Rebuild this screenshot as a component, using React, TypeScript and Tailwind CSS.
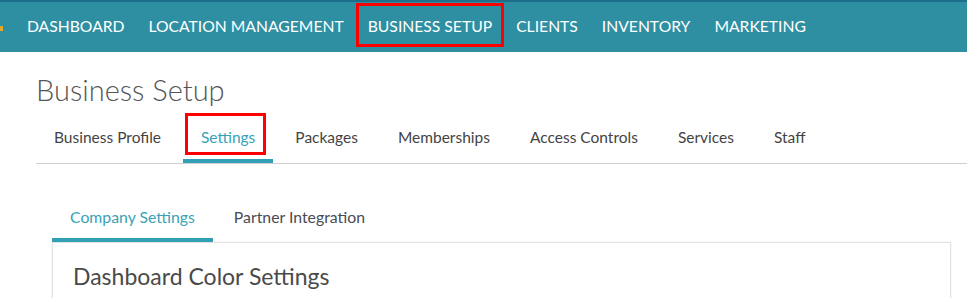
const navItems = [
  "DASHBOARD",
  "LOCATION MANAGEMENT",
  "BUSINESS SETUP",
  "CLIENTS",
  "INVENTORY",
  "MARKETING",
];

const tabs = [
  "Business Profile",
  "Settings",
  "Packages",
  "Memberships",
  "Access Controls",
  "Services",
  "Staff",
];

export default function App() {
  return (
    <div className="w-[967px] h-[298px] overflow-hidden bg-white font-['Lato','Open_Sans',sans-serif]">
      {/* top nav */}
      <div className="h-[52px] bg-[#2e8fa3] border-t-2 border-[#1b6f8a] flex items-stretch">
        <div className="w-[15px] relative">
          <span className="absolute left-0 top-[24px] w-[3px] h-[5px] bg-[#e6a82a]" />
        </div>
        {navItems.map((item) => (
          <div
            key={item}
            className="relative px-3 flex items-center pb-[1px] text-[15.7px] text-white"
          >
            {item}
            {item === "BUSINESS SETUP" && (
              <span className="absolute left-0 right-0 top-px bottom-[5px] border-[3px] border-[#f00]" />
            )}
          </div>
        ))}
      </div>

      <div className="pl-[36px]">
        <h1 className="pt-[20px] text-[29px] leading-[36px] font-light text-[#555]">
          Business Setup
        </h1>

        <div className="mt-[5px] flex gap-[4px] border-b border-[#d0d0d0]">
          {tabs.map((tab) => {
            const active = tab === "Settings";
            return (
              <div
                key={tab}
                className={`relative px-[18px] pt-[14px] pb-[12px] text-[15.5px] leading-[20px] border-b-4 ${
                  active
                    ? "border-[#32a0b4] text-[#3aa2b6]"
                    : "border-transparent text-[#444]"
                }`}
              >
                {tab}
                {active && (
                  <span className="absolute left-[2px] right-[7px] top-0 bottom-[4px] border-[3px] border-[#f00]" />
                )}
              </div>
            );
          })}
        </div>

        <div className="pl-[16px] pr-[16px]">
          <div className="mt-[43px] flex">
            <div className="px-[18px] pb-[11px] text-[15.8px] leading-[20px] text-[#3aa2b6] border-b-4 border-[#32a0b4]">
              Company Settings
            </div>
            <div className="px-[21px] pb-[11px] text-[15.8px] leading-[20px] text-[#4a4a52] border-b-4 border-transparent">
              Partner Integration
            </div>
          </div>
          <div className="h-[80px] border border-[#e2e2e2] shadow-[0_0_2px_rgba(0,0,0,0.08)]">
            <h2 className="pl-[20px] pt-[18px] text-[23px] leading-[30px] text-[#4a4a4a]">
              Dashboard Color Settings
            </h2>
          </div>
        </div>
      </div>
    </div>
  );
}
